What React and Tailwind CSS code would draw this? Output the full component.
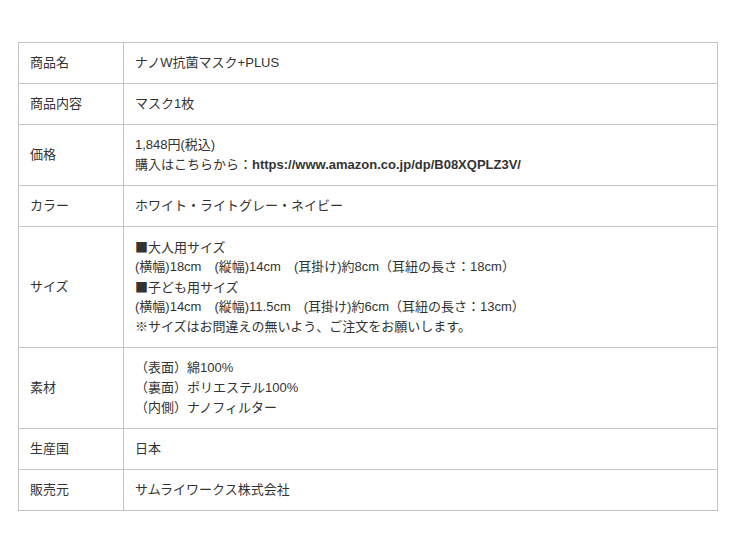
const CJK_FONT = '"Noto Sans CJK JP", sans-serif';

const ROWS = [
  { label: "商品名", lines: ["ナノW抗菌マスク+PLUS"] },
  { label: "商品内容", lines: ["マスク1枚"] },
  {
    label: "価格",
    lines: [
      "1,848円(税込)",
      <>
        購入はこちらから：<b className="font-bold">https://www.amazon.co.jp/dp/B08XQPLZ3V/</b>
      </>,
    ],
  },
  { label: "カラー", lines: ["ホワイト・ライトグレー・ネイビー"] },
  {
    label: "サイズ",
    lines: [
      { cjk: true, text: "■大人用サイズ" },
      "(横幅)18cm\u3000(縦幅)14cm\u3000(耳掛け)約8cm（耳紐の長さ：18cm）",
      { cjk: true, text: "■子ども用サイズ" },
      "(横幅)14cm\u3000(縦幅)11.5cm\u3000(耳掛け)約6cm（耳紐の長さ：13cm）",
      "※サイズはお問違えの無いよう、ご注文をお願いします。",
    ],
  },
  { label: "素材", lines: ["（表面）綿100%", "（裏面）ポリエステル100%", "（内側）ナノフィルター"] },
  { label: "生産国", lines: ["日本"] },
  { label: "販売元", lines: ["サムライワークス株式会社"] },
];

export default function App() {
  return (
    <div
      className="min-h-[551px] bg-white pt-[42px] pl-[18px] text-[13px] leading-5 text-[#333]"
      style={{ fontFamily: '"Liberation Sans", "Noto Sans CJK JP", sans-serif' }}
    >
      <table className="w-[700px] border-collapse border border-[#c4c4c4]">
        <tbody>
          {ROWS.map((r) => (
            <tr key={r.label} className="border-b border-[#c4c4c4]">
              <td className="w-[105px] border-r border-[#c4c4c4] px-[11px] py-[10px] align-middle">{r.label}</td>
              <td className="px-[11px] py-[10px] align-middle">
                {r.lines.map((l, i) =>
                  l && l.cjk ? (
                    <div key={i} className="h-5" style={{ fontFamily: CJK_FONT }}>{l.text}</div>
                  ) : (
                    <div key={i}>{l}</div>
                  )
                )}
              </td>
            </tr>
          ))}
        </tbody>
      </table>
    </div>
  );
}
